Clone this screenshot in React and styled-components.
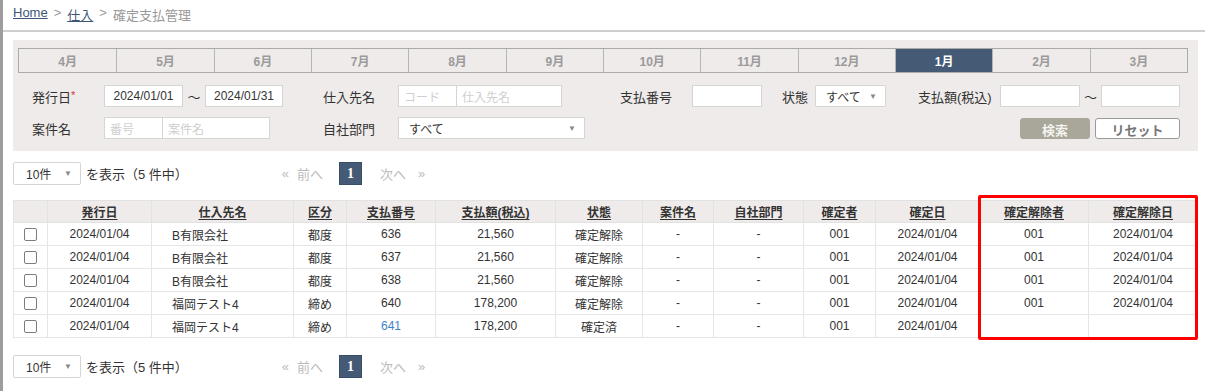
import React from 'react';
import styled, { createGlobalStyle } from 'styled-components';

const GlobalStyle = createGlobalStyle`
  body {
    margin: 0;
    background: #fff;
    font-family: "Liberation Sans", "Noto Sans CJK JP", sans-serif;
    font-size: 12px;
    color: #333;
  }
`;

const months = ['4月', '5月', '6月', '7月', '8月', '9月', '10月', '11月', '12月', '1月', '2月', '3月'];

const columns = [
  { key: 'check', label: '', width: 34 },
  { key: 'date', label: '発行日', width: 104 },
  { key: 'vendor', label: '仕入先名', width: 142, align: 'left' },
  { key: 'kind', label: '区分', width: 53 },
  { key: 'no', label: '支払番号', width: 89 },
  { key: 'amount', label: '支払額(税込)', width: 120 },
  { key: 'status', label: '状態', width: 87 },
  { key: 'project', label: '案件名', width: 71 },
  { key: 'dept', label: '自社部門', width: 90 },
  { key: 'by', label: '確定者', width: 72 },
  { key: 'fixed', label: '確定日', width: 104 },
  { key: 'undoBy', label: '確定解除者', width: 109 },
  { key: 'undoDate', label: '確定解除日', width: 109 },
];

const rows = [
  { date: '2024/01/04', vendor: 'B有限会社', kind: '都度', no: '636', amount: '21,560', status: '確定解除', project: '-', dept: '-', by: '001', fixed: '2024/01/04', undoBy: '001', undoDate: '2024/01/04' },
  { date: '2024/01/04', vendor: 'B有限会社', kind: '都度', no: '637', amount: '21,560', status: '確定解除', project: '-', dept: '-', by: '001', fixed: '2024/01/04', undoBy: '001', undoDate: '2024/01/04' },
  { date: '2024/01/04', vendor: 'B有限会社', kind: '都度', no: '638', amount: '21,560', status: '確定解除', project: '-', dept: '-', by: '001', fixed: '2024/01/04', undoBy: '001', undoDate: '2024/01/04' },
  { date: '2024/01/04', vendor: '福岡テスト4', kind: '締め', no: '640', amount: '178,200', status: '確定解除', project: '-', dept: '-', by: '001', fixed: '2024/01/04', undoBy: '001', undoDate: '2024/01/04' },
  { date: '2024/01/04', vendor: '福岡テスト4', kind: '締め', no: '641', link: true, amount: '178,200', status: '確定済', project: '-', dept: '-', by: '001', fixed: '2024/01/04', undoBy: '', undoDate: '' },
];

const Page = styled.div`
  border-left: 3px solid #9d9d9d;
  min-height: 391px;
  box-sizing: border-box;
`;

const Breadcrumb = styled.div`
  height: 32px;
  padding: 5px 0 0 10px;
  box-sizing: border-box;
  border-bottom: 2px solid #cfcfcf;
  color: #999;
  font-size: 13px;
  display: flex;
  gap: 6px;
  a {
    color: #3d5675;
    text-decoration: underline;
  }
`;

const Content = styled.div`
  padding: 8px 7px 0 10px;
`;

const FilterPanel = styled.div`
  background: #efebea;
  padding: 8px 10px 12px 5px;
`;

const MonthTabs = styled.div`
  display: grid;
  grid-template-columns: repeat(12, 1fr);
  border: 1px solid #aaa;
  height: 25px;
  box-sizing: border-box;
`;

const MonthTab = styled.div`
  display: flex;
  align-items: center;
  justify-content: center;
  font-weight: bold;
  font-size: 12px;
  color: ${({ $active }) => ($active ? '#fff' : '#9a9a9a')};
  background: ${({ $active }) => ($active ? '#445a75' : 'transparent')};
  border-left: ${({ $first }) => ($first ? 'none' : '1px solid #b5b5b5')};
`;

const FilterRows = styled.div`
  padding: 12px 8px 0 14px;
  display: flex;
  flex-direction: column;
  gap: 10px;
`;

const FilterRow = styled.div`
  display: flex;
  align-items: center;
  height: 22px;
`;

const Label = styled.span`
  width: ${({ $w }) => $w}px;
  margin-left: ${({ $ml }) => $ml || 0}px;
  flex-shrink: 0;
  font-size: 13px;
  color: #333;
  sup {
    color: #d33;
    font-size: 11px;
    vertical-align: 3px;
  }
`;

const Input = styled.div`
  width: ${({ $w }) => $w}px;
  height: 22px;
  box-sizing: border-box;
  flex-shrink: 0;
  background: #fff;
  border: 1px solid #d5d5d5;
  margin-left: ${({ $joined }) => ($joined ? '-1px' : '0')};
  display: flex;
  align-items: center;
  padding: 0 5px;
  font-size: 12px;
  color: ${({ $placeholder }) => ($placeholder ? '#cfcfcf' : '#333')};
  justify-content: ${({ $center }) => ($center ? 'center' : 'flex-start')};
`;

const Select = styled(Input)`
  justify-content: space-between;
  padding: 0 8px 0 10px;
  border-radius: ${({ $round }) => ($round ? '2px' : '0')};
  &::after {
    content: '▼';
    font-size: 8px;
    color: #888;
  }
`;

const Tilde = styled.span`
  width: ${({ $w }) => $w}px;
  flex-shrink: 0;
  text-align: center;
  font-size: 13px;
`;

const Buttons = styled.div`
  margin-left: auto;
  display: flex;
  gap: 5px;
`;

const Button = styled.button`
  width: ${({ $w }) => $w}px;
  height: 21px;
  border-radius: 3px;
  font-family: inherit;
  font-size: 13px;
  font-weight: bold;
  cursor: pointer;
  border: 1px solid ${({ $primary }) => ($primary ? '#a9a799' : '#9a9a9a')};
  background: ${({ $primary }) => ($primary ? '#a9a799' : '#fff')};
  color: ${({ $primary }) => ($primary ? '#f4f4f0' : '#777')};
`;

const ListBar = styled.div`
  display: flex;
  align-items: center;
  height: 23px;
  margin: ${({ $m }) => $m};
`;

const PerPage = styled(Select)`
  width: 68px;
  height: 23px;
  border-radius: 2px;
  padding: 0 8px 0 12px;
`;

const ShowText = styled.span`
  margin-left: 5px;
  font-size: 13px;
  color: #333;
`;

const Pager = styled.div`
  margin-left: 94px;
  display: flex;
  align-items: center;
  color: #bbb;
  font-size: 13px;
`;

const PagerLink = styled.span`
  margin: ${({ $m }) => $m};
`;

const PageCurrent = styled.span`
  width: 23px;
  height: 23px;
  background: #445a75;
  border: 1px solid #3a4d66;
  box-sizing: border-box;
  color: #fff;
  font-family: "Liberation Serif", serif;
  font-weight: bold;
  font-size: 14px;
  display: flex;
  align-items: center;
  justify-content: center;
`;

const TableWrap = styled.div`
  position: relative;
  margin-top: 15px;
`;

const Table = styled.table`
  border-collapse: collapse;
  table-layout: fixed;
  width: 1184px;
  font-size: 12px;
  border: 1px solid #e2e2e2;
`;

const Th = styled.th`
  height: 21px;
  padding: 0;
  background: #efebea;
  border: 1px solid #e2e2e2;
  font-weight: bold;
  color: #333;
  text-align: center;
  span {
    text-decoration: underline;
    text-underline-offset: 2px;
  }
`;

const Td = styled.td`
  height: 22px;
  padding: 0 ${({ $align }) => ($align === 'left' ? '20px' : '0')};
  border: 1px solid #e6e6e6;
  text-align: ${({ $align }) => $align || 'center'};
  color: ${({ $link }) => ($link ? '#3d84c6' : '#333')};
  background: #fff;
  white-space: nowrap;
`;

const CheckBox = styled.span`
  display: inline-block;
  width: 11px;
  height: 11px;
  border: 1px solid #7d7d7d;
  border-radius: 2px;
  vertical-align: middle;
`;

const Highlight = styled.div`
  position: absolute;
  left: 965px;
  top: -5px;
  width: 220px;
  height: 145px;
  box-sizing: border-box;
  border: 3px solid #ff0000;
  border-radius: 2px;
  pointer-events: none;
`;

const ListControls = ({ m }) => (
  <ListBar $m={m}>
    <PerPage $w={68}>10件</PerPage>
    <ShowText>を表示（5 件中）</ShowText>
    <Pager>
      <PagerLink $m="0 8px 0 0">«</PagerLink>
      <PagerLink $m="0 16px 0 0">前へ</PagerLink>
      <PageCurrent>1</PageCurrent>
      <PagerLink $m="0 0 0 18px">次へ</PagerLink>
      <PagerLink $m="0 0 0 12px">»</PagerLink>
    </Pager>
  </ListBar>
);

const App = () => (
  <Page>
    <GlobalStyle />
    <Breadcrumb>
      <a>Home</a>
      <span>&gt;</span>
      <a>仕入</a>
      <span>&gt;</span>
      <span>確定支払管理</span>
    </Breadcrumb>
    <Content>
      <FilterPanel>
        <MonthTabs>
          {months.map((m, i) => (
            <MonthTab key={m} $first={i === 0} $active={m === '1月'}>{m}</MonthTab>
          ))}
        </MonthTabs>
        <FilterRows>
          <FilterRow>
            <Label $w={72}>発行日<sup>*</sup></Label>
            <Input $w={79} $center>2024/01/01</Input>
            <Tilde $w={22}>〜</Tilde>
            <Input $w={78} $center>2024/01/31</Input>
            <Label $w={75} $ml={40}>仕入先名</Label>
            <Input $w={59} $placeholder>コード</Input>
            <Input $w={106} $placeholder $joined>仕入先名</Input>
            <Label $w={72} $ml={58}>支払番号</Label>
            <Input $w={70} />
            <Label $w={33} $ml={20}>状態</Label>
            <Select $w={71} $round>すべて</Select>
            <Label $w={82} $ml={32}>支払額(税込)</Label>
            <Input $w={80} />
            <Tilde $w={21}>〜</Tilde>
            <Input $w={79} />
          </FilterRow>
          <FilterRow>
            <Label $w={72}>案件名</Label>
            <Input $w={59} $placeholder>番号</Input>
            <Input $w={108} $placeholder $joined>案件名</Input>
            <Label $w={75} $ml={53}>自社部門</Label>
            <Select $w={187}>すべて</Select>
            <Buttons>
              <Button $primary $w={70}>検索</Button>
              <Button $w={85}>リセット</Button>
            </Buttons>
          </FilterRow>
        </FilterRows>
      </FilterPanel>

      <ListControls m="11px 0 0 0" />

      <TableWrap>
        <Table>
          <colgroup>
            {columns.map((c) => (
              <col key={c.key} style={{ width: c.width }} />
            ))}
          </colgroup>
          <thead>
            <tr>
              {columns.map((c) => (
                <Th key={c.key}>{c.label && <span>{c.label}</span>}</Th>
              ))}
            </tr>
          </thead>
          <tbody>
            {rows.map((r) => (
              <tr key={r.no}>
                <Td><CheckBox /></Td>
                {columns.slice(1).map((c) => (
                  <Td key={c.key} $align={c.align} $link={c.key === 'no' && r.link}>{r[c.key]}</Td>
                ))}
              </tr>
            ))}
          </tbody>
        </Table>
        <Highlight />
      </TableWrap>

      <ListControls m="17px 0 0 0" />
    </Content>
  </Page>
);

export default App;
